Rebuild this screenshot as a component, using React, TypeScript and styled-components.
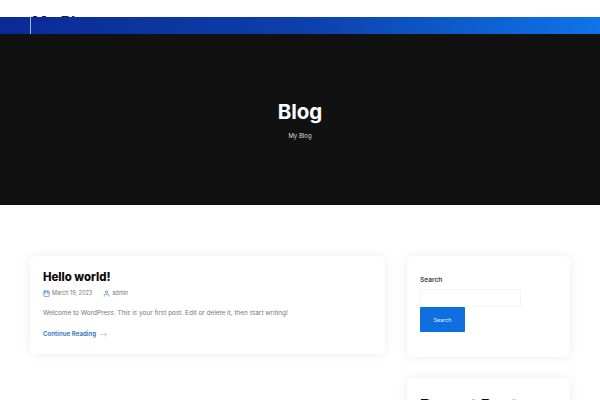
import React from 'react';
import styled, { createGlobalStyle } from 'styled-components';
import { FiCalendar, FiUser } from 'react-icons/fi';

const GlobalStyle = createGlobalStyle`
  html, body {
    margin: 0;
    height: 400px;
    overflow: hidden;
    background: #fff;
    font-family: 'Inter', 'Liberation Sans', sans-serif;
  }
`;

const Header = styled.header`
  height: 17px;
  padding-left: 32px;
  overflow: hidden;
  background: #fff;
`;

const Logo = styled.div`
  margin-top: 12px;
  font-size: 16px;
  line-height: 20px;
  font-weight: 700;
  color: #222;
`;

const GradientBar = styled.div`
  height: 17px;
  padding-left: 30px;
  background: linear-gradient(90deg, #0a2a96 0%, #0c3fab 50%, #0f74e8 100%);
`;

const Divider = styled.div`
  width: 1px;
  height: 100%;
  background: rgba(255, 255, 255, 0.65);
`;

const Hero = styled.section`
  height: 171px;
  background: #111;
  display: flex;
  flex-direction: column;
  align-items: center;
  padding-top: 64px;
  box-sizing: border-box;
  color: #fff;
`;

const HeroTitle = styled.h1`
  margin: 0;
  font-size: 20.5px;
  line-height: 28px;
  font-weight: 700;
`;

const HeroSub = styled.div`
  margin-top: 4px;
  font-size: 6px;
  line-height: 12px;
  color: #ddd;
`;

const Content = styled.main`
  display: grid;
  grid-template-columns: 355px 163px;
  column-gap: 22px;
  padding: 51px 30px 0;
  align-items: start;
`;

const Card = styled.article`
  background: #fff;
  border-radius: 6px;
  box-shadow: 0 0 12px rgba(0, 0, 0, 0.08);
  padding: 12px 13px 14px;
  height: 98px;
  box-sizing: border-box;
`;

const PostTitle = styled.h2`
  margin: 0;
  font-size: 11.4px;
  line-height: 18px;
  font-weight: 800;
  color: #0b0b0b;
`;

const Meta = styled.div`
  display: flex;
  gap: 11px;
  margin-top: 2px;
  font-size: 5.5px;
  line-height: 10px;
  color: #777;
`;

const MetaItem = styled.span`
  display: flex;
  align-items: center;
  gap: 2px;
  svg {
    color: #1a6fd0;
    font-size: 7px;
  }
`;

const Excerpt = styled.p`
  margin: 9px 0 0;
  font-size: 6.45px;
  line-height: 12px;
  color: #777;
`;

const ReadMore = styled.a`
  display: flex;
  align-items: center;
  gap: 4px;
  margin-top: 9px;
  font-size: 6.2px;
  line-height: 12px;
  font-weight: 600;
  color: #2a72bc;
`;

const Sidebar = styled.aside`
  display: flex;
  flex-direction: column;
  gap: 21px;
`;

const Widget = styled.section<{ $height: number }>`
  height: ${({ $height }) => $height}px;
  box-sizing: border-box;
  background: #fff;
  border-radius: 6px;
  box-shadow: 0 0 12px rgba(0, 0, 0, 0.08);
  padding: 19px 13px 0;
`;

const SearchLabel = styled.div`
  font-size: 6.6px;
  line-height: 10px;
  font-weight: 600;
  color: #444;
`;

const SearchInput = styled.div`
  width: 101px;
  height: 18px;
  margin-top: 4px;
  box-sizing: border-box;
  border: 1px solid #f4f4f4;
`;

const SearchButton = styled.button`
  display: block;
  width: 45px;
  height: 25px;
  padding: 0;
  border: none;
  border-radius: 1px;
  background: #0f6fe0;
  color: #e8f0ff;
  font-family: inherit;
  font-size: 5.4px;
`;

const WidgetTitle = styled.h3`
  margin: -1px 0 0;
  font-size: 16.5px;
  line-height: 18px;
  font-weight: 800;
  color: #0b0b0b;
`;

const App: React.FC = () => (
  <>
    <GlobalStyle />
    <Header>
      <Logo>My Blog</Logo>
    </Header>
    <GradientBar>
      <Divider />
    </GradientBar>
    <Hero>
      <HeroTitle>Blog</HeroTitle>
      <HeroSub>My Blog</HeroSub>
    </Hero>
    <Content>
      <Card>
        <PostTitle>Hello world!</PostTitle>
        <Meta>
          <MetaItem>
            <FiCalendar />
            March 19, 2023
          </MetaItem>
          <MetaItem>
            <FiUser />
            admin
          </MetaItem>
        </Meta>
        <Excerpt>Welcome to WordPress. This is your first post. Edit or delete it, then start writing!</Excerpt>
        <ReadMore>
          Continue Reading
          <svg width="7" height="7" viewBox="0 0 9 7" fill="none" stroke="#9bb0c6" strokeWidth="0.7">
            <path d="M0 3.5h8.4M5.6 0.8l2.8 2.7-2.8 2.7" />
          </svg>
        </ReadMore>
      </Card>
      <Sidebar>
        <Widget $height={101}>
          <SearchLabel>Search</SearchLabel>
          <SearchInput />
          <SearchButton>Search</SearchButton>
        </Widget>
        <Widget $height={100}>
          <WidgetTitle>Recent Posts</WidgetTitle>
        </Widget>
      </Sidebar>
    </Content>
  </>
);

export default App;
